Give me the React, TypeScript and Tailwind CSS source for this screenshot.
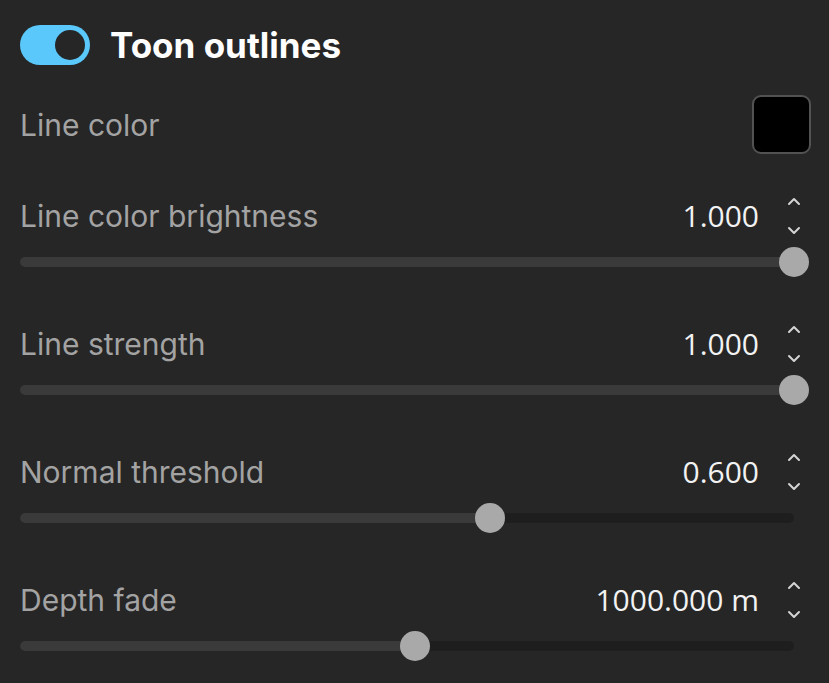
import { useState } from 'react';

type SliderSetting = {
    label: string;
    value: number; // 0..1 position of the thumb
    display: string;
};

const sliders: SliderSetting[] = [
    { label: 'Line color brightness', value: 1, display: '1.000' },
    { label: 'Line strength', value: 1, display: '1.000' },
    { label: 'Normal threshold', value: 0.6, display: '0.600' },
    { label: 'Depth fade', value: 0.5, display: '1000.000 m' },
];

function Toggle({ on, onChange }: { on: boolean; onChange: (v: boolean) => void }) {
    return (
        <button
            type="button"
            onClick={() => onChange(!on)}
            className={`flex h-[40px] w-[70px] shrink-0 items-center rounded-full px-[5px] ${
                on ? 'justify-end bg-[#5ac8fa]' : 'justify-start bg-[#555]'
            }`}
        >
            <span className="block h-[30px] w-[30px] rounded-full bg-[#262626]" />
        </button>
    );
}

function Spinner() {
    return (
        <div className="flex h-[40px] w-[30px] flex-col items-center justify-between py-[1px] text-[#d4d4d4]">
            <svg width="14" height="9" viewBox="0 0 14 9" fill="none">
                <path d="M2 7L7 2L12 7" stroke="currentColor" strokeWidth="2" strokeLinecap="round" strokeLinejoin="round" />
            </svg>
            <svg width="14" height="9" viewBox="0 0 14 9" fill="none">
                <path d="M2 2L7 7L12 2" stroke="currentColor" strokeWidth="2" strokeLinecap="round" strokeLinejoin="round" />
            </svg>
        </div>
    );
}

function SliderRow({ setting }: { setting: SliderSetting }) {
    return (
        <div className="flex flex-col">
            <div className="flex h-[40px] items-center justify-between">
                <span className="text-[30px] leading-none text-[#a3a3a3]">{setting.label}</span>
                <div className="flex items-center gap-[20px]">
                    <span className="font-['Open_Sans',sans-serif] text-[30px] leading-none text-[#f2f2f2]">
                        {setting.display}
                    </span>
                    <Spinner />
                </div>
            </div>
            <div className="relative mt-[11px] h-[30px]">
                <div className="absolute left-0 right-[15px] top-[10px] h-[10px] overflow-hidden rounded-full bg-[#1e1e1e]">
                    <div className="h-full bg-[#3a3a3a]" style={{ width: `${setting.value * 100}%` }} />
                </div>
                <div
                    className="absolute top-0 h-[30px] w-[30px] rounded-full bg-[#a9a9a9]"
                    style={{ left: `calc((100% - 30px) * ${setting.value})` }}
                />
            </div>
        </div>
    );
}

export default function App() {
    const [enabled, setEnabled] = useState(true);

    return (
        <div className="min-h-[683px] bg-[#262626] px-[20px] pt-[25px] font-['Inter',sans-serif]">
            <div className="flex h-[40px] items-center gap-[20px]">
                <Toggle on={enabled} onChange={setEnabled} />
                <h2 className="text-[35px] font-bold leading-none text-white">Toon outlines</h2>
            </div>

            <div className="mt-[30px] flex h-[59px] items-center justify-between">
                <span className="text-[30px] leading-none text-[#a3a3a3]">Line color</span>
                <div className="-mr-[2px] h-[59px] w-[59px] rounded-[9px] border-2 border-[#525252] bg-black" />
            </div>

            <div className="mt-[42px] flex flex-col gap-[47px]">
                {sliders.map((s) => (
                    <SliderRow key={s.label} setting={s} />
                ))}
            </div>
        </div>
    );
}
